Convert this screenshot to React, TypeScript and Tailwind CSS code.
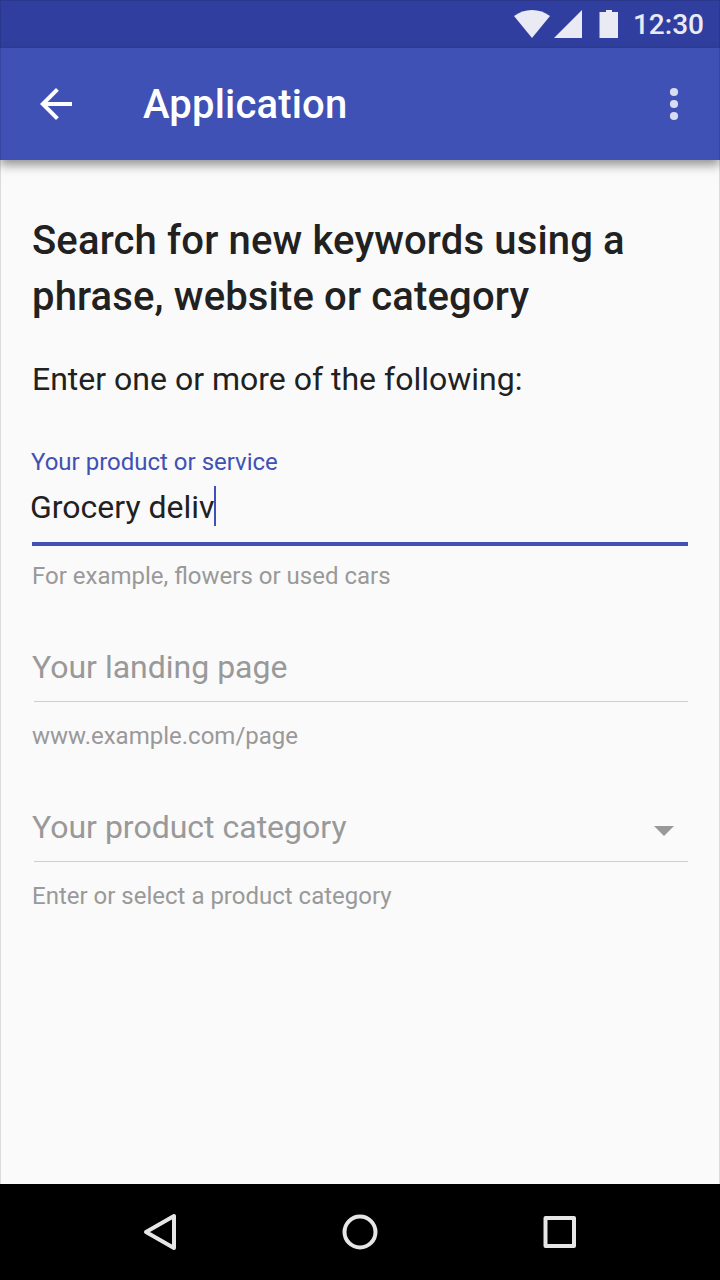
import type { ReactNode } from "react";

function StatusBar() {
  return (
    <div className="flex h-12 shrink-0 items-center justify-end bg-[#303f9f] pr-4 text-[#eaeaf5]">
      <svg className="h-12 w-[119px]" viewBox="0 0 119 48" fill="currentColor">
        <path d="M0 16 Q8 10 18 10 Q28 10 36 16 L18 38 Z" />
        <path d="M68 10V38H40Z" />
        <path d="M92 10h6v2h6v26H85.500V12H92Z" />
      </svg>
      <span className="pt-0.5 text-[28px] leading-8 font-medium">12:30</span>
    </div>
  );
}

function AppBar() {
  return (
    <header className="relative flex h-28 shrink-0 items-center bg-[#3f51b5] text-white shadow-[0_5px_10px_rgba(0,0,0,0.42)]">
      <svg className="ml-8 size-12" viewBox="0 0 24 24" fill="currentColor">
        <path d="M20 11H7.83l5.59-5.59L12 4l-8 8 8 8 1.41-1.41L7.83 13H20v-2z" />
      </svg>
      <h1 className="ml-[63px] grow pt-0.5 text-[40px] font-medium tracking-[0.18px]">Application</h1>
      <svg className="mr-[22px] size-12 opacity-80" viewBox="0 0 48 48" fill="currentColor">
        <circle cx="24" cy="12" r="4.100" />
        <circle cx="24" cy="24" r="4.100" />
        <circle cx="24" cy="36" r="4.100" />
      </svg>
    </header>
  );
}

function Field({ label, hint, children }: { label: string; hint: string; children?: ReactNode }) {
  return (
    <div className="h-40">
      <div className="flex h-[60px] items-center justify-between text-[32px] text-[#999999]">
        <span className="pb-2">{label}</span>
        {children}
      </div>
      <div className="ml-0.5 h-px bg-[#cecece]" />
      <p className="mt-[18px] text-[24px] leading-8 text-[#999999]">{hint}</p>
    </div>
  );
}

export default function App() {
  return (
    <div className="relative flex h-[1280px] w-[720px] flex-col overflow-hidden bg-[#fafafa] font-['Roboto',sans-serif]">
      <StatusBar />
      <AppBar />
      <main className="grow px-8 pt-[53px] text-[#212121]">
        <h2 className="text-[40px] leading-[56px] font-medium tracking-[0.15px]">
          Search for new keywords using a<br />phrase, website or category
        </h2>
        <p className="mt-[34px] text-[32px] leading-10">Enter one or more of the following:</p>
        <div className="mt-[47px] h-[195px]">
          <p className="-ml-px text-[24px] leading-8 text-[#3f51b5]">Your product or service</p>
          <div className="-ml-0.5 flex h-16 items-center pb-1.5 text-[32px]">
            <span>Grocery deliv</span>
            <span className="-ml-px mb-0.5 h-10 w-[2px] bg-[#3f51b5]" />
          </div>
          <div className="h-1 bg-[#3f51b5]" />
          <p className="mt-[14px] text-[24px] leading-8 text-[#999999]">For example, flowers or used cars</p>
        </div>
        <Field label="Your landing page" hint="www.example.com/page" />
        <Field label="Your product category" hint="Enter or select a product category">
          <svg className="mr-[14px] h-[10px] w-5" viewBox="0 0 20 10" fill="currentColor"><path d="M0 0h20L10 10Z" /></svg>
        </Field>
      </main>
      <nav className="flex h-24 shrink-0 items-center justify-center bg-black">
        <svg className="h-24 w-[480px]" viewBox="120 1184 480 96" fill="none" stroke="#e6e6e6" strokeWidth="4" strokeLinejoin="round">
          <path d="M174 1216V1248L146 1232Z" />
          <circle cx="360" cy="1232" r="15.500" />
          <rect x="545.500" y="1218" width="28.500" height="28" />
        </svg>
      </nav>
      <div className="pointer-events-none absolute inset-0 border border-black/12" />
    </div>
  );
}
